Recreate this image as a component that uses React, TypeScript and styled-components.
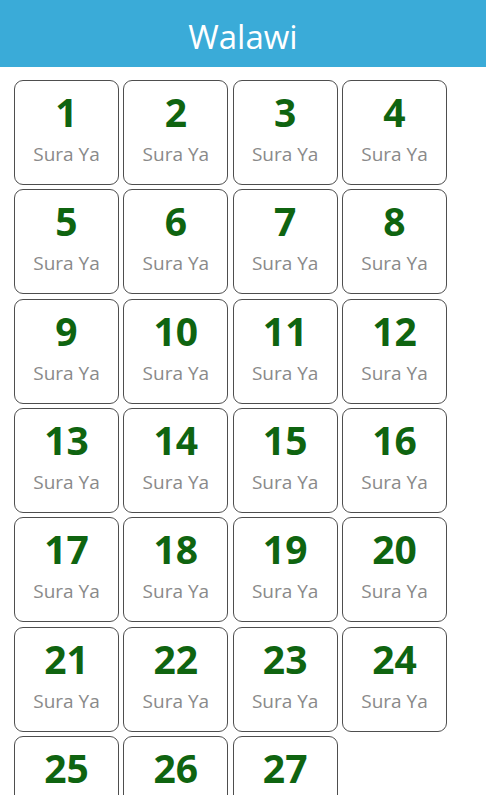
import React from "react";
import styled, { createGlobalStyle } from "styled-components";

const Global = createGlobalStyle`
  html, body { margin: 0; padding: 0; background: #ffffff; }
  body { font-family: "Open Sans", "Noto Sans", sans-serif; }
`;

const Page = styled.div`
  width: 486px;
  height: 810px;
  display: flex;
  flex-direction: column;
  background: #ffffff;
  overflow: hidden;
`;

const Header = styled.header`
  height: 67px;
  flex: 0 0 67px;
  background: #3aabd8;
  display: flex;
  align-items: center;
  justify-content: center;
`;

const Title = styled.h1`
  margin: 0;
  color: #ffffff;
  font-family: "Open Sans", sans-serif;
  font-weight: 400;
  font-size: 33px;
  line-height: 1;
  padding-top: 5px;
`;

const Scroller = styled.main`
  height: 728px;
  flex: 0 0 728px;
  overflow: hidden;
`;

const Grid = styled.div`
  display: grid;
  grid-template-columns: repeat(4, 105px);
  column-gap: 4.33px;
  row-gap: 4.33px;
  padding: 13px 0 0 14px;
`;

const Card = styled.div`
  box-sizing: border-box;
  width: 105px;
  height: 105px;
  border: 1.5px solid #4e4e4e;
  border-radius: 9px;
  display: flex;
  flex-direction: column;
  align-items: center;
  padding-top: 11px;
  background: #ffffff;
`;

const Num = styled.div`
  font-family: "Open Sans", sans-serif;
  font-weight: 700;
  font-size: 39px;
  line-height: 1;
  color: #0f6410;
`;

const Label = styled.div`
  margin-top: 14px;
  font-family: "Open Sans", sans-serif;
  font-weight: 400;
  font-size: 19px;
  line-height: 1;
  color: #8a8a8a;
`;

export default function App() {
  const items = Array.from({ length: 27 }, (_, i) => i + 1);
  return (
    <>
      <Global />
      <Page>
        <Header>
          <Title>Walawi</Title>
        </Header>
        <Scroller>
          <Grid>
            {items.map((n) => (
              <Card key={n}>
                <Num>{n}</Num>
                <Label>Sura Ya</Label>
              </Card>
            ))}
          </Grid>
        </Scroller>
      </Page>
    </>
  );
}
